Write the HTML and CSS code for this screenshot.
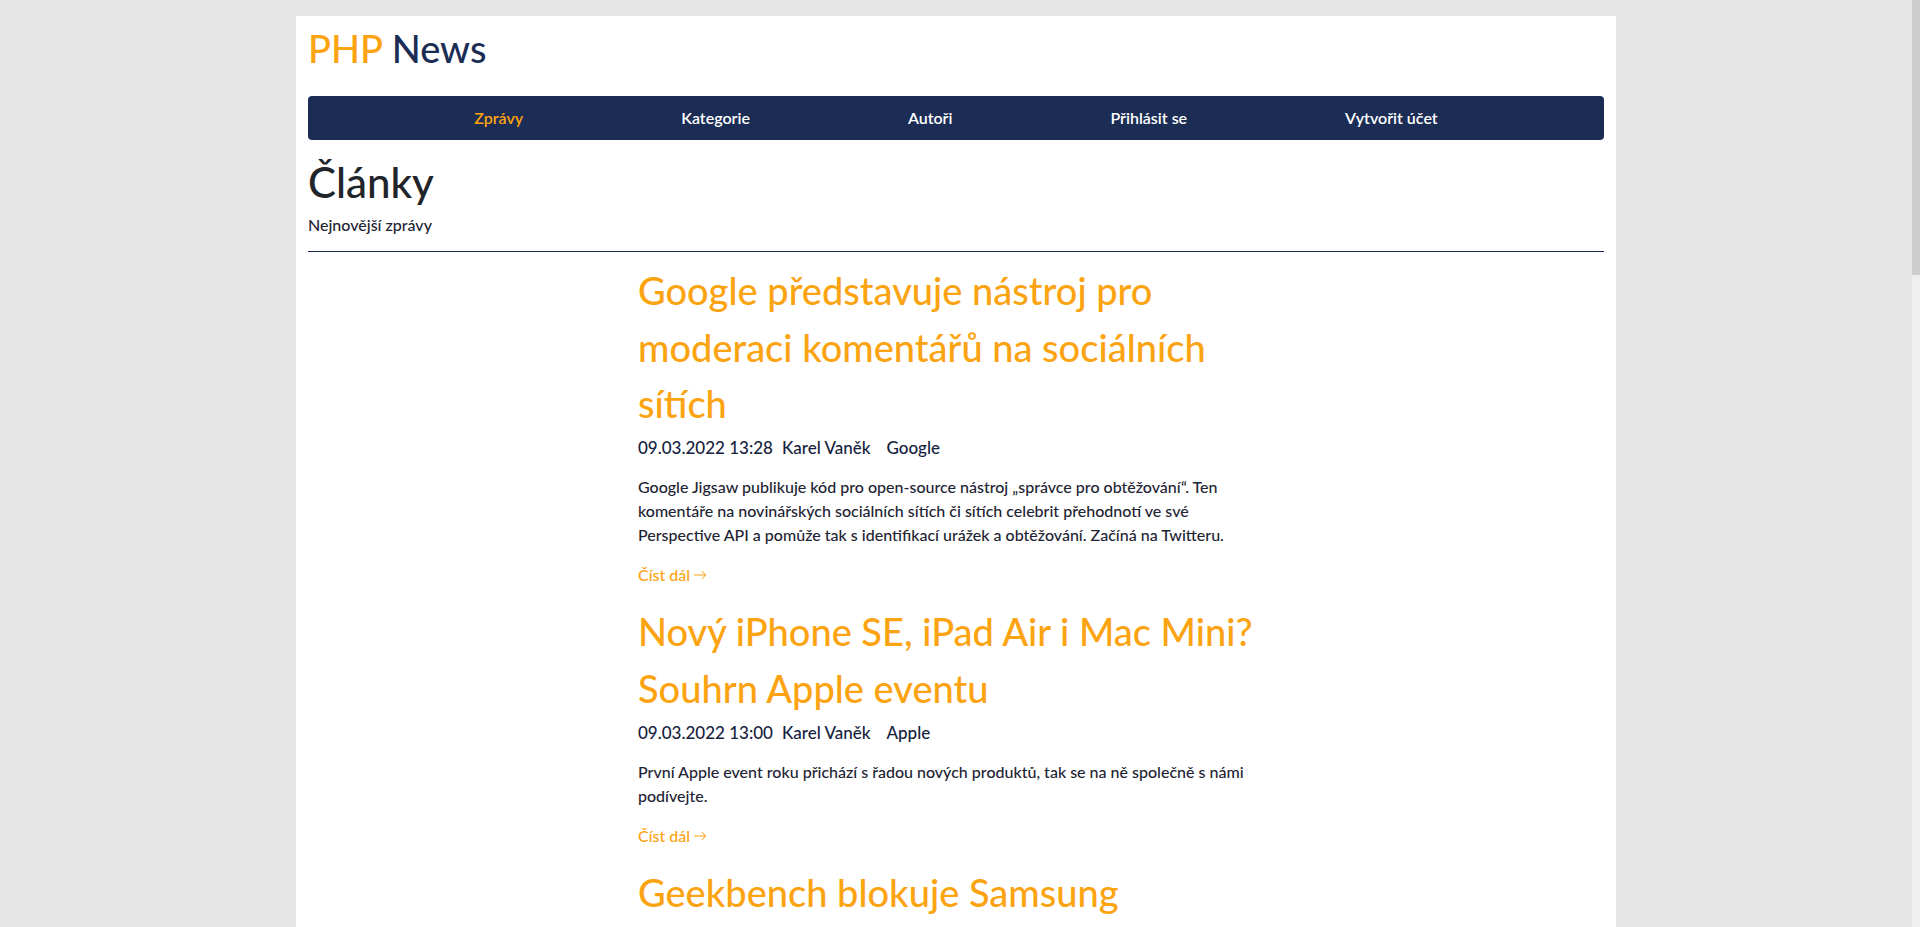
FILE: index.html
```html
<!DOCTYPE html>
<html lang="cs">
<head>
<meta charset="utf-8">
<title>PHP News</title>
<link rel="stylesheet" href="styles.css">
</head>
<body>
<div class="page">
  <header class="header">
    <a class="logo" href="#"><span class="logo-php">PHP</span> <span class="logo-news">News</span></a>
  </header>
  <nav class="nav">
    <a class="nav-link active" href="#">Zprávy</a>
    <a class="nav-link" href="#">Kategorie</a>
    <a class="nav-link" href="#">Autoři</a>
    <a class="nav-link" href="#">Přihlásit se</a>
    <a class="nav-link" href="#">Vytvořit účet</a>
  </nav>
  <h1 class="page-title">Články</h1>
  <p class="page-sub">Nejnovější zprávy</p>
  <hr class="rule">
  <main class="articles">
    <article class="article">
      <h2 class="article-title">Google představuje nástroj pro moderaci komentářů na sociálních sítích</h2>
      <div class="meta"><span class="meta-date">09.03.2022 13:28</span><span class="meta-author">Karel Vaněk</span><span class="meta-cat">Google</span></div>
      <p class="perex">Google Jigsaw publikuje kód pro open-source nástroj „správce pro obtěžování“. Ten komentáře na novinářských sociálních sítích či sítích celebrit přehodnotí ve své Perspective API a pomůže tak s identifikací urážek a obtěžování. Začíná na Twitteru.</p>
      <a class="more" href="#">Číst dál <svg class="arrow" viewBox="0 0 16 16" width="16" height="16"><path fill="currentColor" fill-rule="evenodd" d="M1 8a.5.5 0 0 1 .5-.5h11.793l-3.147-3.146a.5.5 0 0 1 .708-.708l4 4a.5.5 0 0 1 0 .708l-4 4a.5.5 0 0 1-.708-.708L13.293 8.5H1.5A.5.5 0 0 1 1 8z"/></svg></a>
    </article>
    <article class="article">
      <h2 class="article-title">Nový iPhone SE, iPad Air i Mac Mini? Souhrn Apple eventu</h2>
      <div class="meta"><span class="meta-date">09.03.2022 13:00</span><span class="meta-author">Karel Vaněk</span><span class="meta-cat">Apple</span></div>
      <p class="perex">První Apple event roku přichází s řadou nových produktů, tak se na ně společně s námi podívejte.</p>
      <a class="more" href="#">Číst dál <svg class="arrow" viewBox="0 0 16 16" width="16" height="16"><path fill="currentColor" fill-rule="evenodd" d="M1 8a.5.5 0 0 1 .5-.5h11.793l-3.147-3.146a.5.5 0 0 1 .708-.708l4 4a.5.5 0 0 1 0 .708l-4 4a.5.5 0 0 1-.708-.708L13.293 8.5H1.5A.5.5 0 0 1 1 8z"/></svg></a>
    </article>
    <article class="article">
      <h2 class="article-title">Geekbench blokuje Samsung smartphony řady Galaxy S22</h2>
      <div class="meta"><span class="meta-date">08.03.2022 17:45</span><span class="meta-author">Karel Vaněk</span><span class="meta-cat">Samsung</span></div>
      <p class="perex">Populární benchmark vyřadil z žebříčků několik modelů Samsung Galaxy. Ty totiž podle všeho omezují výkon u vybraných aplikací a her.</p>
      <a class="more" href="#">Číst dál <svg class="arrow" viewBox="0 0 16 16" width="16" height="16"><path fill="currentColor" fill-rule="evenodd" d="M1 8a.5.5 0 0 1 .5-.5h11.793l-3.147-3.146a.5.5 0 0 1 .708-.708l4 4a.5.5 0 0 1 0 .708l-4 4a.5.5 0 0 1-.708-.708L13.293 8.5H1.5A.5.5 0 0 1 1 8z"/></svg></a>
    </article>
    <article class="article">
      <h2 class="article-title">Microsoft testuje reklamy v Průzkumníku souborů</h2>
      <div class="meta"><span class="meta-date">08.03.2022 12:10</span><span class="meta-author">Jana Nováková</span><span class="meta-cat">Microsoft</span></div>
      <p class="perex">V testovací verzi Windows 11 se objevily nabídky služeb Microsoftu přímo v Průzkumníku souborů. Firma tvrdí, že jde pouze o experiment.</p>
      <a class="more" href="#">Číst dál <svg class="arrow" viewBox="0 0 16 16" width="16" height="16"><path fill="currentColor" fill-rule="evenodd" d="M1 8a.5.5 0 0 1 .5-.5h11.793l-3.147-3.146a.5.5 0 0 1 .708-.708l4 4a.5.5 0 0 1 0 .708l-4 4a.5.5 0 0 1-.708-.708L13.293 8.5H1.5A.5.5 0 0 1 1 8z"/></svg></a>
    </article>
    <article class="article">
      <h2 class="article-title">PHP 8.1.3 přináší opravy chyb a bezpečnostní záplaty</h2>
      <div class="meta"><span class="meta-date">07.03.2022 09:30</span><span class="meta-author">Petr Svoboda</span><span class="meta-cat">PHP</span></div>
      <p class="perex">Vývojáři PHP vydali novou opravnou verzi, která řeší několik chyb v jádru jazyka i v rozšířeních. Aktualizaci doporučujeme nainstalovat co nejdříve.</p>
      <a class="more" href="#">Číst dál <svg class="arrow" viewBox="0 0 16 16" width="16" height="16"><path fill="currentColor" fill-rule="evenodd" d="M1 8a.5.5 0 0 1 .5-.5h11.793l-3.147-3.146a.5.5 0 0 1 .708-.708l4 4a.5.5 0 0 1 0 .708l-4 4a.5.5 0 0 1-.708-.708L13.293 8.5H1.5A.5.5 0 0 1 1 8z"/></svg></a>
    </article>
    <article class="article">
      <h2 class="article-title">Nvidia potvrdila únik dat po kybernetickém útoku</h2>
      <div class="meta"><span class="meta-date">06.03.2022 15:20</span><span class="meta-author">Karel Vaněk</span><span class="meta-cat">Nvidia</span></div>
      <p class="perex">Útočníci získali přístup k interním systémům společnosti a zveřejnili část zdrojových kódů i přihlašovací údaje zaměstnanců.</p>
      <a class="more" href="#">Číst dál <svg class="arrow" viewBox="0 0 16 16" width="16" height="16"><path fill="currentColor" fill-rule="evenodd" d="M1 8a.5.5 0 0 1 .5-.5h11.793l-3.147-3.146a.5.5 0 0 1 .708-.708l4 4a.5.5 0 0 1 0 .708l-4 4a.5.5 0 0 1-.708-.708L13.293 8.5H1.5A.5.5 0 0 1 1 8z"/></svg></a>
    </article>
    <article class="article">
      <h2 class="article-title">Firefox 98 mění výchozí vyhledávač v některých zemích</h2>
      <div class="meta"><span class="meta-date">05.03.2022 11:05</span><span class="meta-author">Jana Nováková</span><span class="meta-cat">Mozilla</span></div>
      <p class="perex">Nová verze prohlížeče Firefox přináší rychlejší stahování souborů a upravenou nabídku vyhledávačů.</p>
      <a class="more" href="#">Číst dál <svg class="arrow" viewBox="0 0 16 16" width="16" height="16"><path fill="currentColor" fill-rule="evenodd" d="M1 8a.5.5 0 0 1 .5-.5h11.793l-3.147-3.146a.5.5 0 0 1 .708-.708l4 4a.5.5 0 0 1 0 .708l-4 4a.5.5 0 0 1-.708-.708L13.293 8.5H1.5A.5.5 0 0 1 1 8z"/></svg></a>
    </article>
    <article class="article">
      <h2 class="article-title">Steam Deck míří k prvním zákazníkům</h2>
      <div class="meta"><span class="meta-date">04.03.2022 18:40</span><span class="meta-author">Petr Svoboda</span><span class="meta-cat">Valve</span></div>
      <p class="perex">Přenosná herní konzole od Valve se konečně dostává do rukou hráčů. Podívejte se, co nabízí.</p>
      <a class="more" href="#">Číst dál <svg class="arrow" viewBox="0 0 16 16" width="16" height="16"><path fill="currentColor" fill-rule="evenodd" d="M1 8a.5.5 0 0 1 .5-.5h11.793l-3.147-3.146a.5.5 0 0 1 .708-.708l4 4a.5.5 0 0 1 0 .708l-4 4a.5.5 0 0 1-.708-.708L13.293 8.5H1.5A.5.5 0 0 1 1 8z"/></svg></a>
    </article>
  </main>
</div>
<div class="scrollbar" aria-hidden="true"><div class="scrollbar-thumb"></div></div>
</body>
</html>
```

FILE: styles.css
```css
html, body {
  margin: 0;
  padding: 0;
}

body {
  background: #e5e5e5;
  font-family: Lato, "Noto Sans", sans-serif;
  color: #1e2433;
  font-size: 16px;
  line-height: 24px;
  margin-right: 8px;
}

html {
  scrollbar-width: none;
}
::-webkit-scrollbar {
  width: 0;
  height: 0;
}

.scrollbar {
  position: fixed;
  top: 0;
  right: 0;
  width: 8px;
  height: 100vh;
  background: #efefef;
}
.scrollbar-thumb {
  height: 275px;
  background: #cdcdcd;
}

.page {
  width: 1320px;
  box-sizing: border-box;
  margin: 16px auto 0;
  padding: 8px 12px 40px;
  background: #fff;
}

.header {
  height: 48px;
  margin-bottom: 24px;
}

.logo {
  display: inline-block;
  text-decoration: none;
  font-size: 38px;
  line-height: 48px;
  font-weight: 500;
}
.logo-php { color: #fca311; }
.logo-news { color: #1c2d55; }

.nav {
  display: flex;
  justify-content: center;
  gap: 158px;
  height: 44px;
  align-items: center;
  background: #1c2d55;
  border-radius: 4px;
  margin-bottom: 17px;
}

.nav-link {
  color: #fff;
  text-decoration: none;
  font-weight: 600;
  font-size: 16px;
}
.nav-link.active { color: #fca311; }

.page-title {
  margin: 0 0 6px;
  font-size: 42px;
  line-height: 50px;
  font-weight: 500;
  color: #212529;
}

.page-sub {
  margin: 0 0 14px;
  font-weight: 500;
}

.rule {
  margin: 0;
  border: 0;
  border-top: 1px solid #1c2d55;
}

.articles {
  width: 636px;
  margin: 10px auto 0;
}

.article {
  margin-bottom: 16px;
}

.article-title {
  margin: 0;
  font-size: 38px;
  line-height: 56.5px;
  font-weight: 500;
  color: #fca311;
}

.meta {
  display: flex;
  margin-top: 4.5px;
  color: #14213d;
  font-size: 17px;
  font-weight: 500;
}
.meta-date { margin-right: 9px; }
.meta-author { margin-right: 16px; }

.perex {
  margin: 15px 0 16px;
  font-weight: 500;
}

.more {
  display: inline-flex;
  align-items: center;
  gap: 3px;
  color: #fca311;
  text-decoration: none;
  font-weight: 500;
}
.arrow {
  width: 14px;
  height: 14px;
}
```
